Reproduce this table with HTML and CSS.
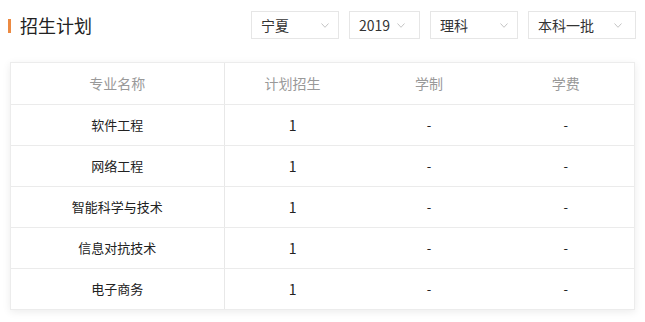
FILE: index.html
```html
<!DOCTYPE html>
<html lang="zh-CN">
<head>
<meta charset="utf-8">
<title>招生计划</title>
<link rel="stylesheet" href="styles.css">
</head>
<body>
<div class="page">
  <div class="topbar">
    <h2 class="title"><span class="mark"></span>招生计划</h2>
    <div class="filters">
      <div class="sel w88"><span>宁夏</span><svg class="chev" viewBox="0 0 8 5" width="8" height="5"><path d="M0.5 0.5 L4 4.3 L7.5 0.5" fill="none" stroke="#c4c4c4" stroke-width="1"/></svg></div>
      <div class="sel w71"><span>2019</span><svg class="chev" viewBox="0 0 8 5" width="8" height="5"><path d="M0.5 0.5 L4 4.3 L7.5 0.5" fill="none" stroke="#c4c4c4" stroke-width="1"/></svg></div>
      <div class="sel w88"><span>理科</span><svg class="chev" viewBox="0 0 8 5" width="8" height="5"><path d="M0.5 0.5 L4 4.3 L7.5 0.5" fill="none" stroke="#c4c4c4" stroke-width="1"/></svg></div>
      <div class="sel w108"><span>本科一批</span><svg class="chev" viewBox="0 0 8 5" width="8" height="5"><path d="M0.5 0.5 L4 4.3 L7.5 0.5" fill="none" stroke="#c4c4c4" stroke-width="1"/></svg></div>
    </div>
  </div>
  <div class="card">
    <table class="plan">
      <colgroup><col class="c1"><col class="c2"><col class="c2"><col class="c2"></colgroup>
      <thead>
        <tr><th class="first">专业名称</th><th>计划招生</th><th>学制</th><th>学费</th></tr>
      </thead>
      <tbody>
        <tr><td class="first">软件工程</td><td>1</td><td>-</td><td>-</td></tr>
        <tr><td class="first">网络工程</td><td>1</td><td>-</td><td>-</td></tr>
        <tr><td class="first">智能科学与技术</td><td>1</td><td>-</td><td>-</td></tr>
        <tr><td class="first">信息对抗技术</td><td>1</td><td>-</td><td>-</td></tr>
        <tr><td class="first">电子商务</td><td>1</td><td>-</td><td>-</td></tr>
      </tbody>
    </table>
  </div>
</div>
</body>
</html>
```
FILE: styles.css
```css
* { box-sizing: border-box; }
html, body { margin: 0; padding: 0; background: #fff; }
body {
  font-family: "Noto Sans CJK SC", "Noto Sans", sans-serif;
  color: #333;
  width: 645px;
  height: 322px;
  overflow: hidden;
}
.page { padding-top: 11px; }
.topbar {
  display: flex;
  justify-content: space-between;
  align-items: center;
  height: 28px;
  padding-left: 8px;
  padding-right: 9px;
}
.title {
  margin: 0;
  display: flex;
  align-items: center;
  font-size: 18px;
  font-weight: normal;
  color: #222;
  line-height: 28px;
}
.mark {
  display: block;
  width: 3px;
  height: 14px;
  background: #ec8a42;
  margin-right: 9px;
  margin-top: 2px;
}
.filters { display: flex; gap: 10px; }
.sel {
  height: 28px;
  border: 1px solid #e6e6e6;
  display: flex;
  align-items: center;
  justify-content: space-between;
  padding: 0 9px 0 9px;
  font-size: 14px;
  color: #333;
  background: #fff;
}
.sel span { line-height: 26px; }
.w88 { width: 88px; }
.w71 { width: 71px; padding-right: 14px; }
.w108 { width: 108px; padding-right: 13px; }
.chev { display: block; }
.card {
  margin: 23px 10px 0 10px;
  width: 625px;
  border: 1px solid #ececec;
  box-shadow: 0 2px 8px rgba(0,0,0,0.08);
  background: #fff;
}
.plan {
  width: 100%;
  border-collapse: collapse;
  table-layout: fixed;
}
.c1 { width: 213px; }
.plan th, .plan td {
  text-align: center;
  padding: 0;
  border-bottom: 1px solid #ebebeb;
}
.plan th {
  height: 41px;
  font-size: 14px;
  font-weight: normal;
  color: #999;
}
.plan td {
  height: 41px;
  font-size: 13px;
  color: #222;
}
.plan tbody tr:last-child td { border-bottom: none; }
.plan .first { border-right: 1px solid #e8e8e8; }
.plan td:nth-child(2) { font-size: 14px; }
```
